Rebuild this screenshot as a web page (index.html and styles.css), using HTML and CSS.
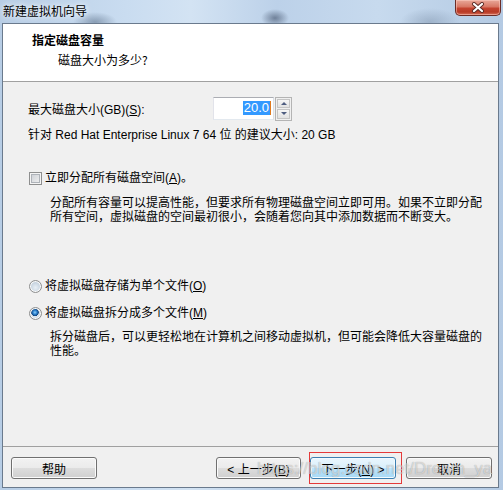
FILE: index.html
```html
<!DOCTYPE html>
<html lang="zh-CN">
<head>
    <meta charset="UTF-8">
    <title>新建虚拟机向导</title>
    <link rel="stylesheet" href="styles.css">
</head>
<body>

    <div class="window">
        <div class="titlebar">
            <span class="title">新建虚拟机向导</span>
            <button class="close" title="关闭">
                <svg width="14" height="11" viewBox="0 0 14 11">
                    <path d="M3 2 L11 9 M11 2 L3 9" stroke="#5a2a25" stroke-width="4" stroke-linecap="round"/>
                    <path d="M3 2 L11 9 M11 2 L3 9" stroke="#fff" stroke-width="2.2" stroke-linecap="round"/>
                </svg>
            </button>
        </div>

        <div class="client">
            <!-- 标题区 -->
            <div class="header">
                <div class="header-title">指定磁盘容量</div>
                <div class="header-sub">磁盘大小为多少?</div>
            </div>

            <div class="content">
                <div class="size-row">
                    <span class="size-label">最大磁盘大小(GB)(<u>S</u>):</span>
                    <div class="spin">
                        <div class="spin-input"><span class="sel">20.0</span><span class="caret"></span></div>
                        <div class="spin-btns">
                            <span class="spin-btn"><i class="arrow-up"></i></span>
                            <span class="spin-btn"><i class="arrow-down"></i></span>
                        </div>
                    </div>
                </div>
                <p class="hint">针对 Red Hat Enterprise Linux 7 64 位 的建议大小: 20 GB</p>

                <div class="option check-row">
                    <span class="checkbox"></span>
                    <span>立即分配所有磁盘空间(<u>A</u>)。</span>
                </div>
                <p class="desc">分配所有容量可以提高性能，但要求所有物理磁盘空间立即可用。如果不立即分配<br>所有空间，虚拟磁盘的空间最初很小，会随着您向其中添加数据而不断变大。</p>

                <div class="option radio-first">
                    <span class="radio"></span>
                    <span>将虚拟磁盘存储为单个文件(<u>O</u>)</span>
                </div>
                <div class="option radio-second">
                    <span class="radio checked"></span>
                    <span>将虚拟磁盘拆分成多个文件(<u>M</u>)</span>
                </div>
                <p class="desc desc-split">拆分磁盘后，可以更轻松地在计算机之间移动虚拟机，但可能会降低大容量磁盘的<br>性能。</p>
            </div>

            <!-- 底部按钮 -->
            <div class="footer">
                <button class="btn">帮助</button>
                <button class="btn btn-back">&lt; 上一步(<u>B</u>)</button>
                <button class="btn btn-next">下一步(<u>N</u>) &gt;</button>
                <button class="btn btn-cancel">取消</button>
            </div>
        </div>
    </div>

    <div class="mark-box"></div>
    <div class="watermark">https://blog.csdn.net/Dream_ya</div>

</body>
</html>
```

FILE: styles.css
```css
* {
    margin: 0;
    padding: 0;
    box-sizing: border-box;
}

body {
    width: 503px;
    height: 490px;
    overflow: hidden;
    position: relative;
    font-family: "Liberation Sans", "Noto Sans CJK SC", sans-serif;
    font-size: 12px;
    color: #000;
    background:
        radial-gradient(ellipse 22px 10px at 95px 22px, rgba(90, 110, 135, 0.55), transparent),
        radial-gradient(ellipse 14px 9px at 275px 18px, rgba(60, 75, 100, 0.6), transparent),
        radial-gradient(ellipse 30px 14px at 430px 22px, rgba(120, 140, 165, 0.45), transparent),
        linear-gradient(to right, #b7cde5 0%, #c9dcf0 25%, #d3e3f3 38%, #bcd1e9 55%, #c7daee 75%, #b4cae3 100%);
}

.window {
    display: flex;
    flex-direction: column;
    height: 490px;
}

/* 标题栏 */
.titlebar {
    height: 23px;
    display: flex;
    align-items: flex-start;
    padding: 0 2px 0 3px;
}

.title {
    font-family: "Noto Sans CJK SC", sans-serif;
    line-height: 22px;
    text-shadow: 0 0 5px rgba(255, 255, 255, 0.9), 0 0 9px rgba(255, 255, 255, 0.7);
}

.close {
    margin-left: auto;
    width: 46px;
    height: 16px;
    border: 1px solid #6b2c26;
    border-top: none;
    border-radius: 0 0 5px 5px;
    background: linear-gradient(#e9a899 0%, #d87764 45%, #c4432f 55%, #b83a26 80%, #d7705a 100%);
    box-shadow: inset 0 0 0 1px rgba(255, 210, 200, 0.5);
    display: flex;
    align-items: center;
    justify-content: center;
}

/* 客户区 */
.client {
    margin-left: 2px;
    width: 497px;
    height: 465px;
    border: 1px solid #6a7a8d;
    background-color: #f0f0f0;
    display: flex;
    flex-direction: column;
}

.header {
    height: 58px;
    background-color: #fff;
    border-bottom: 1px solid #a0a0a0;
    padding: 8px 0 0 29px;
}

.header-title {
    font-family: "Noto Sans CJK SC", sans-serif;
    font-weight: bold;
    line-height: 16px;
}

.header-sub {
    font-family: "Noto Sans CJK SC", sans-serif;
    line-height: 16px;
    margin: 4px 0 0 26px;
}

.content {
    flex: 1;
    padding: 15px 0 0 25px;
}

.size-row {
    display: flex;
    align-items: center;
    height: 23px;
}

.size-label {
    width: 185px;
}

.spin {
    display: flex;
    align-items: flex-start;
}

.spin-input {
    width: 61px;
    height: 23px;
    border: 1px solid #abadb3;
    border-color: #abadb3 #dbdfe6 #e3e9ef #e2e3ea;
    background-color: #fff;
    display: flex;
    justify-content: flex-end;
    align-items: center;
    padding-right: 2px;
}

.sel {
    background-color: #3399ff;
    color: #fff;
    font-size: 13px;
    line-height: 14px;
    padding: 0 1px;
}

.caret {
    width: 1px;
    height: 14px;
    background-color: #e07a1f;
}

.spin-btns {
    margin-left: 1px;
    width: 17px;
    height: 24px;
    border: 1px solid #b4b4b4;
    padding: 1px;
    display: flex;
    flex-direction: column;
    gap: 1px;
    background-color: #f0f0f0;
}

.spin-btn {
    flex: 1;
    border: 1px solid #c5c5c5;
    background: linear-gradient(#f6f6f6, #e2e2e2);
    display: flex;
    align-items: center;
    justify-content: center;
}

.arrow-up, .arrow-down {
    width: 0;
    height: 0;
    border-left: 3px solid transparent;
    border-right: 3px solid transparent;
}

.arrow-up {
    border-bottom: 3px solid #4e5d80;
}

.arrow-down {
    border-top: 3px solid #4e5d80;
}

.hint {
    line-height: 16px;
    margin-top: 7px;
}

.option {
    display: flex;
    align-items: center;
    gap: 3px;
    height: 16px;
    line-height: 16px;
    margin-left: 1px;
}

.check-row {
    margin-top: 27px;
}

.checkbox {
    width: 13px;
    height: 13px;
    border: 1px solid #8e8f8f;
    background: linear-gradient(135deg, #c8ccd2, #f4f4f4);
    box-shadow: inset 0 0 0 1px #f4f4f4, inset 0 0 0 2px #aeb3b9;
}

.radio {
    width: 13px;
    height: 13px;
    border-radius: 50%;
    border: 1px solid #8e8f8f;
    background: radial-gradient(circle at 50% 60%, #e9f0f6 0, #c6d3df 60%, #f6f6f6 100%);
    box-shadow: inset 0 0 0 1px #fafafa;
}

.radio.checked {
    background:
        radial-gradient(circle at 45% 40%, #8fd0f7 0, #2a7fce 2px, #12467f 3.5px, transparent 4px),
        radial-gradient(circle at 50% 60%, #e9f0f6 0, #c6d3df 60%, #f6f6f6 100%);
}

.desc {
    white-space: nowrap;
    line-height: 14px;
    margin: 10px 0 0 22px;
}

.radio-first {
    margin-top: 54px;
}

.radio-second {
    margin-top: 11px;
}

.desc-split {
    margin-top: 9px;
}

/* 底部按钮 */
.footer {
    height: 41px;
    border-top: 1px solid #a0a0a0;
    padding: 10px 0 0 8px;
    display: flex;
    align-items: flex-start;
}

.btn {
    width: 86px;
    height: 22px;
    border: 1px solid #707070;
    border-radius: 3px;
    background: linear-gradient(#f2f2f2 0%, #ebebeb 50%, #dddddd 51%, #cfcfcf 100%);
    box-shadow: inset 0 0 0 1px #fbfbfb;
    font-family: "Liberation Sans", "Noto Sans CJK SC", sans-serif;
    font-size: 12px;
    color: #000;
}

.btn-back {
    margin-left: auto;
    width: 85px;
}

.btn-next {
    margin-left: 9px;
    border-color: #3c7fb1;
    background: linear-gradient(#eaf6fd 0%, #d9f0fc 50%, #bee6fd 51%, #a7d9f5 100%);
    box-shadow: inset 0 0 0 1px #f3fbfe;
}

.btn-cancel {
    margin: 0 6px 0 10px;
}

/* 截图标注 */
.mark-box {
    position: absolute;
    left: 309px;
    top: 452px;
    width: 93px;
    height: 32px;
    border: 1px solid #e43a3a;
}

.watermark {
    position: absolute;
    left: 257px;
    top: 459px;
    font-size: 17px;
    color: rgba(255, 255, 255, 0.55);
    text-shadow: 0 0 1px rgba(0, 0, 0, 0.35);
    pointer-events: none;
}
```
